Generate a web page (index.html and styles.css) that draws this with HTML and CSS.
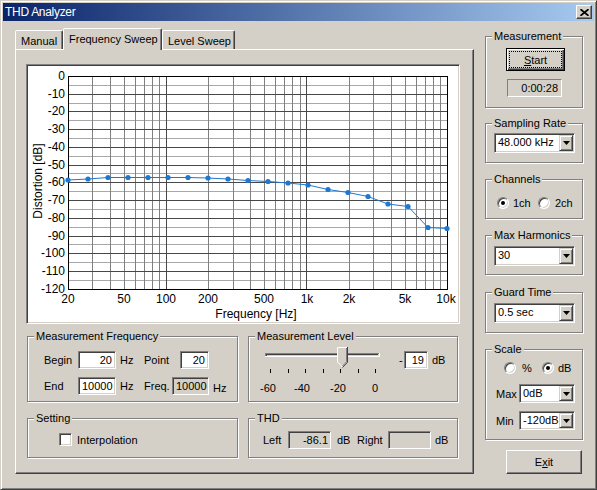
FILE: index.html
```html
<!DOCTYPE html>
<html lang="en">
<head>
  <meta charset="UTF-8">
  <title>THD Analyzer</title>
  <link rel="stylesheet" href="styles.css">
</head>
<body>
  <div class="window">
    <div class="titlebar">
      <span class="caption">THD Analyzer</span>
      <span class="close-btn">
        <svg width="9" height="7" viewBox="0 0 9 7"><path d="M0.5 0.2L8.5 6.8M8.5 0.2L0.5 6.8" stroke="#000" stroke-width="1.7"/></svg>
      </span>
    </div>

    <div class="client">
      <div class="tabs">
        <div class="tab-strip">
          <span class="tab tab-manual">Manual</span>
          <span class="tab tab-freq active">Frequency Sweep</span>
          <span class="tab tab-level">Level Sweep</span>
        </div>

        <div class="tab-panel">
          <div class="chart">
            <svg class="plot" width="430" height="256" viewBox="28 66 430 256">
              <!-- grid -->
              <path stroke="#a8a8a8" shape-rendering="crispEdges" d="M68 85.5H447M68 103.5H447M68 120.5H447M68 138.5H447M68 156.5H447M68 173.5H447M68 191.5H447M68 209.5H447M68 227.5H447M68 244.5H447M68 262.5H447M68 280.5H447"/>
              <path stroke="#808080" shape-rendering="crispEdges" d="M92.5 76V289M110.5 76V289M124.5 76V289M135.5 76V289M144.5 76V289M152.5 76V289M159.5 76V289M208.5 76V289M233.5 76V289M250.5 76V289M264.5 76V289M275.5 76V289M284.5 76V289M292.5 76V289M300.5 76V289M349.5 76V289M373.5 76V289M391.5 76V289M405.5 76V289M416.5 76V289M425.5 76V289M433.5 76V289M440.5 76V289"/>
              <path stroke="#484848" shape-rendering="crispEdges" d="M68 94.5H447M68 111.5H447M68 129.5H447M68 147.5H447M68 165.5H447M68 182.5H447M68 200.5H447M68 218.5H447M68 236.5H447M68 253.5H447M68 271.5H447M166.5 76V289M306.5 76V289"/>
              <rect x="68.5" y="76.5" width="379" height="213" fill="none" stroke="#000" shape-rendering="crispEdges"/>

              <!-- data -->
              <polyline fill="none" stroke="#1f78d0" points="68,180 88,179 108,177.5 128,177.5 148,177.5 168,177.5 188,177.5 208,178 228,179 248,180.5 268,181.5 288,183 308,185 328,189.5 348,192.5 368,196.5 388,204 408,206.5 428,227.5 447,228.5"/>
              <g fill="#1f78d0">
                <circle cx="68" cy="180" r="2.6"/><circle cx="88" cy="179" r="2.6"/>
                <circle cx="108" cy="177.5" r="2.6"/><circle cx="128" cy="177.5" r="2.6"/>
                <circle cx="148" cy="177.5" r="2.6"/><circle cx="168" cy="177.5" r="2.6"/>
                <circle cx="188" cy="177.5" r="2.6"/><circle cx="208" cy="178" r="2.6"/>
                <circle cx="228" cy="179" r="2.6"/><circle cx="248" cy="180.5" r="2.6"/>
                <circle cx="268" cy="181.5" r="2.6"/><circle cx="288" cy="183" r="2.6"/>
                <circle cx="308" cy="185" r="2.6"/><circle cx="328" cy="189.5" r="2.6"/>
                <circle cx="348" cy="192.5" r="2.6"/><circle cx="368" cy="196.5" r="2.6"/>
                <circle cx="388" cy="204" r="2.6"/><circle cx="408" cy="206.5" r="2.6"/>
                <circle cx="428" cy="227.5" r="2.6"/><circle cx="447" cy="228.5" r="2.6"/>
              </g>

              <!-- axis labels -->
              <g class="axis-text" text-anchor="end">
                <text x="65" y="80">0</text>
                <text x="65" y="98">-10</text>
                <text x="65" y="115">-20</text>
                <text x="65" y="133">-30</text>
                <text x="65" y="151">-40</text>
                <text x="65" y="169">-50</text>
                <text x="65" y="186">-60</text>
                <text x="65" y="204">-70</text>
                <text x="65" y="222">-80</text>
                <text x="65" y="240">-90</text>
                <text x="65" y="257">-100</text>
                <text x="65" y="275">-110</text>
                <text x="65" y="293">-120</text>
              </g>
              <g class="axis-text" text-anchor="middle">
                <text x="68" y="303">20</text>
                <text x="124" y="303">50</text>
                <text x="166" y="303">100</text>
                <text x="208" y="303">200</text>
                <text x="264" y="303">500</text>
                <text x="307" y="303">1k</text>
                <text x="349" y="303">2k</text>
                <text x="405" y="303">5k</text>
                <text x="446" y="303">10k</text>
                <text x="256" y="318">Frequency [Hz]</text>
                <text transform="translate(41.5 181) rotate(-90)">Distortion [dB]</text>
              </g>
            </svg>
          </div>

          <div class="panel-groups">
            <div class="group g-mfreq">
              <span class="group-title">Measurement Frequency</span>
              <div class="field-row row-begin">
                <span class="lbl w-name">Begin</span>
                <span class="edit w-hz">20</span>
                <span class="unit w-unit">Hz</span>
                <span class="lbl w-point">Point</span>
                <span class="edit w-pt">20</span>
              </div>
              <div class="field-row row-end">
                <span class="lbl w-name">End</span>
                <span class="edit w-hz">10000</span>
                <span class="unit w-unit">Hz</span>
                <span class="lbl w-freq">Freq.</span>
                <span class="edit readonly w-fq">10000</span>
                <span class="unit unit-low">Hz</span>
              </div>
            </div>

            <div class="group g-level">
              <span class="group-title">Measurement Level</span>
              <div class="level-row">
                <svg class="slider" width="138" height="51" viewBox="258 345 138 51">
                  <g shape-rendering="crispEdges">
                    <rect x="265" y="353" width="114" height="4" fill="#d4d0c8"/>
                    <path d="M265 353.5H379M265.5 353V357" stroke="#808080"/>
                    <path d="M266 354.5H378M266.5 354V356" stroke="#404040"/>
                    <path d="M265 356.5H380M379.5 353V357" stroke="#fff"/>
                    <path d="M270.5 369V373M288.5 369V373M305.5 369V373M323.5 369V373M340.5 369V373M358.5 369V373M375.5 369V373" stroke="#000"/>
                  </g>
                  <path d="M337 347H348V362L342.5 367.5L337 362Z" fill="#d4d0c8"/>
                  <path d="M337.5 362V347.5H347M337.5 362L342.5 367" fill="none" stroke="#fff"/>
                  <path d="M347.5 347V362.2L342.5 367.5" fill="none" stroke="#404040"/>
                  <path d="M346.5 348V361.8L342.5 366" fill="none" stroke="#808080"/>
                  <g class="tick-text" text-anchor="middle">
                    <text x="268" y="392">-60</text>
                    <text x="302" y="392">-40</text>
                    <text x="338" y="392">-20</text>
                    <text x="375" y="392">0</text>
                  </g>
                </svg>
                <span class="minus">-</span>
                <span class="edit w-lv">19</span>
                <span class="unit unit-lv">dB</span>
              </div>
            </div>

            <div class="group g-setting">
              <span class="group-title">Setting</span>
              <div class="check-row">
                <span class="checkbox"></span>
                <span class="check-label">Interpolation</span>
              </div>
            </div>

            <div class="group g-thd">
              <span class="group-title">THD</span>
              <div class="field-row row-thd">
                <span class="lbl w-left">Left</span>
                <span class="edit readonly w-thd">-86.1</span>
                <span class="unit w-db">dB</span>
                <span class="lbl w-right">Right</span>
                <span class="edit readonly w-thd"></span>
                <span class="unit unit-right">dB</span>
              </div>
            </div>
          </div>
        </div>
      </div>

      <div class="side">
        <div class="group g-meas">
          <span class="group-title">Measurement</span>
          <span class="btn btn-start"><span class="focus"><u>S</u>tart</span></span>
          <span class="timer">0:00:28</span>
        </div>

        <div class="group g-rate">
          <span class="group-title">Sampling Rate</span>
          <div class="combo c-wide">
            <span class="combo-text">48.000 kHz</span>
            <span class="combo-btn"><svg width="7" height="4" viewBox="0 0 7 4"><path d="M0 0H7L3.5 4Z"/></svg></span>
          </div>
        </div>

        <div class="group g-ch">
          <span class="group-title">Channels</span>
          <div class="radio-row ch-row">
            <span class="radio checked"></span><span class="rlabel r-1ch">1ch</span>
            <span class="radio"></span><span class="rlabel r-2ch">2ch</span>
          </div>
        </div>

        <div class="group g-mh">
          <span class="group-title">Max Harmonics</span>
          <div class="combo c-wide">
            <span class="combo-text">30</span>
            <span class="combo-btn"><svg width="7" height="4" viewBox="0 0 7 4"><path d="M0 0H7L3.5 4Z"/></svg></span>
          </div>
        </div>

        <div class="group g-gt">
          <span class="group-title">Guard Time</span>
          <div class="combo c-wide">
            <span class="combo-text">0.5 sec</span>
            <span class="combo-btn"><svg width="7" height="4" viewBox="0 0 7 4"><path d="M0 0H7L3.5 4Z"/></svg></span>
          </div>
        </div>

        <div class="group g-scale">
          <span class="group-title">Scale</span>
          <div class="radio-row scale-row">
            <span class="radio"></span><span class="rlabel r-pct">%</span>
            <span class="radio checked"></span><span class="rlabel r-db">dB</span>
          </div>
          <div class="scale-field sf-max">
            <span class="lbl w-mm">Max</span>
            <div class="combo c-small">
              <span class="combo-text">0dB</span>
              <span class="combo-btn"><svg width="7" height="4" viewBox="0 0 7 4"><path d="M0 0H7L3.5 4Z"/></svg></span>
            </div>
          </div>
          <div class="scale-field sf-min">
            <span class="lbl w-mm">Min</span>
            <div class="combo c-small">
              <span class="combo-text">-120dB</span>
              <span class="combo-btn"><svg width="7" height="4" viewBox="0 0 7 4"><path d="M0 0H7L3.5 4Z"/></svg></span>
            </div>
          </div>
        </div>

        <span class="btn btn-exit">E<u>x</u>it</span>
      </div>
    </div>
  </div>
</body>
</html>
```

FILE: styles.css
```css
*{
  box-sizing: border-box;
}

body{
  margin: 0;
  background-color: #d4d0c8;
  font: 11px "Liberation Sans", Arial, sans-serif;
  color: #000;
}

/* window frame */
.window{
  width: 597px;
  height: 490px;
  padding: 2px;
  border: 1px solid;
  border-color: #d4d0c8 #404040 #404040 #d4d0c8;
  box-shadow: inset 1px 1px #fff, inset -1px -1px #808080;
  background-color: #d4d0c8;
}

.titlebar{
  height: 18px;
  display: flex;
  align-items: center;
  justify-content: space-between;
  padding: 0 2px;
  background: linear-gradient(to right, #0a246a, #a6caf0);
  color: #fff;
}

.caption{
  font-size: 12px;
  letter-spacing: -0.3px;
}

.close-btn{
  width: 16px;
  height: 14px;
  display: flex;
  align-items: center;
  justify-content: center;
  background-color: #d4d0c8;
  border: 1px solid;
  border-color: #fff #404040 #404040 #fff;
  box-shadow: inset -1px -1px #808080;
}

.client{
  display: flex;
  padding: 7px 0 0 12px;
}

/* tabs */
.tabs{
  width: 459px;
}

.tab-strip{
  display: flex;
  align-items: flex-end;
  height: 21px;
}

.tab{
  height: 19px;
  padding: 3px 0 0 5px;
  line-height: 15px;
  border: 1px solid;
  border-bottom: none;
  border-color: #fff #404040 transparent #fff;
  border-radius: 2px 2px 0 0;
  box-shadow: inset -1px 0 #808080;
  background-color: #d4d0c8;
  white-space: nowrap;
}

.tab-manual{ width: 48px; }
.tab-freq{ width: 99px; }
.tab-level{ width: 73px; }

.tab.active{
  position: relative;
  z-index: 1;
  height: 22px;
  margin-bottom: -1px;
}

.tab-panel{
  height: 425px;
  padding: 14px 0 0 10px;
  border: 1px solid;
  border-color: #fff #404040 #404040 #fff;
  box-shadow: inset -1px -1px #808080;
}

/* chart */
.chart{
  width: 434px;
  height: 260px;
  padding: 1px;
  border: 1px solid;
  border-color: #808080 #fff #fff #808080;
  box-shadow: inset 1px 1px #404040, inset -1px -1px #d4d0c8;
  background-color: #fff;
}

.plot{
  display: block;
}

.axis-text{
  font-size: 12px;
}

.tick-text{
  font-size: 11px;
}

/* group boxes */
.panel-groups{
  display: grid;
  grid-template-columns: 211px 210px;
  grid-template-rows: 66px 40px;
  column-gap: 10px;
  row-gap: 16px;
  margin: 12px 0 0 1px;
}

.group{
  display: flex;
  flex-direction: column;
  align-items: flex-start;
  border: 1px solid #808080;
  box-shadow: inset 1px 1px #fff, 1px 1px #fff;
}

.group-title{
  height: 13px;
  margin: -7px 0 0 6px;
  padding: 0 2px;
  line-height: 13px;
  background-color: #d4d0c8;
  white-space: nowrap;
}

/* edits */
.edit{
  display: block;
  flex: none;
  height: 18px;
  padding: 0 3px;
  line-height: 16px;
  text-align: right;
  border: 1px solid;
  border-color: #808080 #fff #fff #808080;
  box-shadow: inset 1px 1px #404040, inset -1px -1px #d4d0c8;
  background-color: #fff;
}

.edit.readonly{
  background-color: #d4d0c8;
}

.lbl, .unit{
  flex: none;
  white-space: nowrap;
}

.field-row{
  display: flex;
  align-items: center;
  height: 18px;
}

.row-begin{ margin: 8px 0 0 16px; }
.row-end{ margin: 8px 0 0 16px; }

.w-name{ width: 34px; }
.w-hz{ width: 38px; }
.w-unit{ width: 28px; padding-left: 4px; }
.w-point{ width: 36px; }
.w-pt{ width: 29px; }
.w-freq{ width: 28px; }
.w-fq{ width: 37px; }

.unit-low{
  padding-left: 4px;
  margin-top: 4px;
}

/* level slider */
.level-row{
  display: flex;
  align-items: flex-start;
  margin: 2px 0 0 9px;
}

.slider{
  display: block;
}

.minus{
  width: 8px;
  padding-left: 3px;
  margin-top: 6px;
  line-height: 18px;
}

.w-lv{
  width: 24px;
  margin-top: 6px;
}

.unit-lv{
  margin-top: 6px;
  padding-left: 4px;
  line-height: 18px;
}

/* setting */
.check-row{
  display: flex;
  align-items: center;
  margin: 8px 0 0 31px;
}

.checkbox{
  width: 13px;
  height: 13px;
  border: 1px solid;
  border-color: #808080 #fff #fff #808080;
  box-shadow: inset 1px 1px #404040, inset -1px -1px #d4d0c8;
  background-color: #fff;
}

.check-label{
  margin-left: 5px;
}

/* thd */
.row-thd{ margin: 6px 0 0 14px; }
.w-left{ width: 25px; }
.w-thd{ width: 43px; padding-right: 2px; }
.w-db{ width: 26px; padding-left: 6px; }
.w-right{ width: 31px; }
.unit-right{ padding-left: 4px; }

/* right column */
.side{
  width: 98px;
  margin-left: 11px;
  padding-top: 8px;
  display: flex;
  flex-direction: column;
}

.g-meas{ height: 72px; }
.g-rate{ height: 40px; margin-top: 15px; }
.g-ch{ height: 40px; margin-top: 16px; }
.g-mh{ height: 40px; margin-top: 16px; }
.g-gt{ height: 41px; margin-top: 17px; }
.g-scale{ height: 91px; margin-top: 16px; }

.btn{
  display: flex;
  align-items: center;
  justify-content: center;
  background-color: #d4d0c8;
}

.btn-start{
  width: 59px;
  height: 23px;
  margin: 5px 0 0 20px;
  padding: 2px;
  border: 1px solid #000;
  box-shadow: inset 1px 1px #fff, inset -1px -1px #404040, inset -2px -2px #808080;
}

.focus{
  flex: 1;
  align-self: stretch;
  display: flex;
  align-items: center;
  justify-content: center;
  border: 1px dotted #000;
}

.timer{
  width: 55px;
  height: 18px;
  margin: 8px 0 0 21px;
  padding-right: 3px;
  line-height: 16px;
  text-align: right;
  border: 1px solid;
  border-color: #808080 #fff #fff #808080;
}

.btn-exit{
  width: 76px;
  height: 24px;
  margin: 10px 0 0 21px;
  border: 1px solid;
  border-color: #fff #404040 #404040 #fff;
  box-shadow: inset -1px -1px #808080;
}

/* combo boxes */
.combo{
  display: flex;
  height: 20px;
  padding: 1px;
  border: 1px solid;
  border-color: #808080 #fff #fff #808080;
  box-shadow: inset 1px 1px #404040, inset -1px -1px #d4d0c8;
  background-color: #fff;
}

.c-wide{
  width: 81px;
  margin: 4px 0 0 8px;
}

.g-rate .c-wide{ margin-top: 3px; }

.c-small{
  width: 56px;
  height: 19px;
}

.combo-text{
  flex: 1;
  padding-left: 2px;
  line-height: 15px;
  white-space: nowrap;
  overflow: hidden;
}

.combo-btn{
  width: 14px;
  display: flex;
  align-items: center;
  justify-content: center;
  border: 1px solid;
  border-color: #d4d0c8 #404040 #404040 #d4d0c8;
  box-shadow: inset 1px 1px #fff, inset -1px -1px #808080;
  background-color: #d4d0c8;
}

/* radios */
.radio-row{
  display: flex;
  align-items: center;
  height: 13px;
}

.ch-row{ margin: 10px 0 0 11px; }
.scale-row{ margin: 5px 0 0 18px; }

.radio{
  position: relative;
  flex: none;
  width: 12px;
  height: 12px;
  border-radius: 50%;
  border: 1px solid;
  border-color: #808080 #fff #fff #808080;
  box-shadow: inset 1px 1px #404040, inset -1px -1px #d4d0c8;
  background-color: #fff;
}

.radio.checked::after{
  content: "";
  position: absolute;
  left: 3px;
  top: 3px;
  width: 4px;
  height: 4px;
  border-radius: 50%;
  background-color: #000;
}

.r-1ch{ width: 25px; margin-left: 4px; }
.r-2ch{ margin-left: 5px; }
.r-pct{ width: 20px; margin-left: 6px; }
.r-db{ margin-left: 4px; }

.scale-field{
  display: flex;
  align-items: center;
  margin-left: 10px;
}

.sf-max{ margin-top: 10px; }
.sf-min{ margin-top: 8px; }

.w-mm{ width: 23px; }
```
